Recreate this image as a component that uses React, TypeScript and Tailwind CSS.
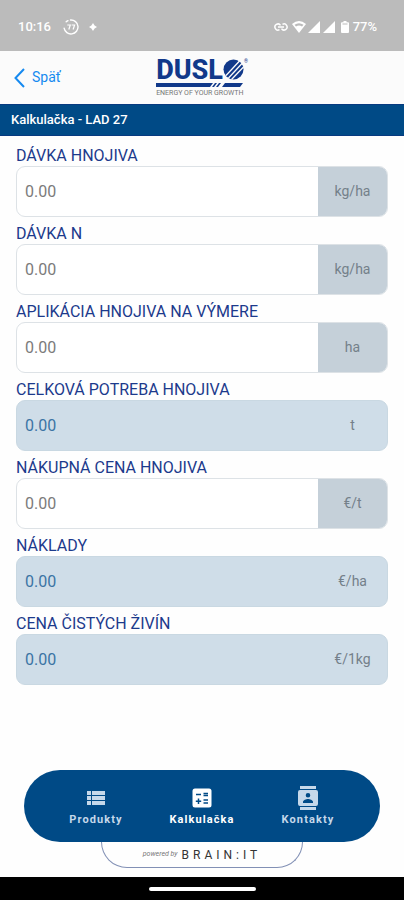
import React from 'react';
import { MdViewList } from 'react-icons/md';
import clsx from 'clsx';

interface Field {
  id: string;
  label: string;
  unit: string;
  computed?: boolean;
}

const fields: Field[] = [
  { id: 'davka-hnojiva', label: 'DÁVKA HNOJIVA', unit: 'kg/ha' },
  { id: 'davka-n', label: 'DÁVKA N', unit: 'kg/ha' },
  { id: 'vymera', label: 'APLIKÁCIA HNOJIVA NA VÝMERE', unit: 'ha' },
  { id: 'potreba', label: 'CELKOVÁ POTREBA HNOJIVA', unit: 't', computed: true },
  { id: 'nakupna-cena', label: 'NÁKUPNÁ CENA HNOJIVA', unit: '€/t' },
  { id: 'naklady', label: 'NÁKLADY', unit: '€/ha', computed: true },
  { id: 'cena-zivin', label: 'CENA ČISTÝCH ŽIVÍN', unit: '€/1kg', computed: true },
];

const StatusBar: React.FC = () => (
  <div className="flex h-[51px] items-center justify-between bg-[#bbbbbb] pl-[18px] pr-[27px] pt-[2px] text-white">
    <div className="flex items-center">
      <span className="text-[13px] font-medium">10:16</span>
      <svg className="ml-3 size-4" viewBox="0 0 16 16" fill="none" stroke="currentColor">
        <path d="M3.2 2.8A7 7 0 0 1 5 1.7M7.5 1a7 7 0 1 1-6.4 8.2" strokeWidth="1.4" strokeLinecap="round" />
        <path d="M4.3 6h3L5.8 10.500M8.6 6h3l-1.5 4.500" strokeWidth="1.2" />
      </svg>
      <svg className="ml-[10px] size-2" viewBox="0 0 8 8" fill="currentColor">
        <path d="M4 0l1.6 2.400L8 4 5.600 5.600 4 8 2.400 5.600 0 4l2.400-1.600z" />
      </svg>
    </div>
    <div className="flex items-center">
      <svg className="h-[10px] w-[14px]" viewBox="0 0 14 10" fill="none" stroke="currentColor" strokeWidth="1.5">
        <path d="M5.500 7.600A3 3 0 1 1 6.500 3.400M8.500 2.400A3 3 0 1 1 7.500 6.600" />
        <path d="M4 5h6" />
      </svg>
      <svg className="ml-1 h-3 w-[14px]" viewBox="0 0 14 12">
        <path d="M0 3Q7-3 14 3L7 12z" fill="currentColor" />
        <path d="M2.500 3.700Q7 .6 11.500 3.700L10 5.400Q7 3.600 4 5.400z" fill="#bbbbbb" />
      </svg>
      <svg className="ml-[2px] h-3 w-[12px]" viewBox="0 0 12 12" fill="currentColor">
        <path d="M12 0v12H0z" />
      </svg>
      <svg className="ml-[3px] h-3 w-[12px]" viewBox="0 0 12 12" fill="currentColor">
        <path d="M12 0v12H0z" />
      </svg>
      <svg className="ml-[6px] h-3 w-2" viewBox="0 0 8 12" fill="currentColor">
        <path d="M2.500 0h3v1.200H7a1 1 0 0 1 1 1V11a1 1 0 0 1-1 1H1a1 1 0 0 1-1-1V2.200a1 1 0 0 1 1-1h1.500z" />
        <path d="M1.500 3h5" stroke="#bbbbbb" strokeWidth="1" />
      </svg>
      <span className="ml-1 text-[13px] font-medium">77%</span>
    </div>
  </div>
);

const Logo: React.FC = () => (
  <div className="flex flex-col text-[#11398a]">
    <div className="flex items-center">
      <span className="text-[27px] font-extrabold leading-[22px]">DUSL</span>
      <svg className="size-[21px]" viewBox="0 0 21 21">
        <circle cx="10.500" cy="10.500" r="10" fill="currentColor" />
        <path d="M3 16.500L16.500 2M5.500 19L19 4.500M8.500 20.500L20.500 8" stroke="#fbfbfb" strokeWidth="1.3" />
      </svg>
      <span className="self-start text-[5px] leading-[5px]">®</span>
    </div>
    <svg className="mt-[2px] h-1 w-[87px]" viewBox="0 0 87 4" fill="currentColor">
      <path d="M0 0h57l-3 4H0zM59 0h2l-3 4h-2zM63 0h2l-3 4h-2zM69 0h18l-3 4H66z" />
    </svg>
    <span className="mt-[2px] text-[7px] leading-[8px] text-[#777777]">ENERGY OF YOUR GROWTH</span>
  </div>
);

const Header: React.FC = () => (
  <header>
    <div className="grid h-[53px] grid-cols-[1fr_auto_1fr] items-center bg-[#fbfbfb] px-[14px]">
      <button type="button" className="flex items-center gap-[7px] justify-self-start text-[14px] text-[#168af0]">
        <svg className="h-5 w-[11px]" viewBox="0 0 11 20" fill="none" stroke="currentColor" strokeWidth="2">
          <path d="M10 1L1.500 10 10 19" />
        </svg>
        Späť
      </button>
      <Logo />
    </div>
    <h1 className="flex h-8 items-center border-y border-[#083a80] bg-[#004a86] px-[11px] text-[13px] font-medium text-white">
      Kalkulačka - LAD 27
    </h1>
  </header>
);

const CalculatorField: React.FC<{ field: Field }> = ({ field }) => (
  <div>
    <label htmlFor={field.id} className="block text-[16px] leading-5 text-[#1c3a8c]">
      {field.label}
    </label>
    <div
      className={clsx(
        'flex h-[51px] overflow-hidden rounded-[9px] border',
        field.computed ? 'border-[#c9d8e2] bg-[#cfdde8]' : 'border-[#dde2e6] bg-white'
      )}
    >
      <input
        id={field.id}
        type="text"
        inputMode="decimal"
        placeholder="0.00"
        readOnly={field.computed}
        className={clsx(
          'min-w-0 flex-1 bg-transparent px-2 text-[16px] outline-none',
          field.computed ? 'placeholder:text-[#3b74a4]' : 'placeholder:text-[#7b7b7b]'
        )}
      />
      <span
        className={clsx(
          'flex w-[69px] items-center justify-center text-[14px] text-[#74808a]',
          !field.computed && 'bg-[#c5d0d9]'
        )}
      >
        {field.unit}
      </span>
    </div>
  </div>
);

const CalculatorIcon: React.FC = () => (
  <svg className="size-6" viewBox="0 0 24 24">
    <rect x="2.500" y="2.500" width="19" height="19" rx="2.500" fill="currentColor" />
    <path
      d="M6 8.500h5M13.500 7.500h4.500M13.500 9.500h4.500M8.500 12.500v5.500M5.800 15.200h5.400M13.500 14h4.500M13.500 17h4.500"
      stroke="#004a86"
      strokeWidth="1.5"
    />
  </svg>
);

const ContactsIcon: React.FC = () => (
  <svg className="size-6" viewBox="0 0 24 24">
    <path
      d="M4 0h16v3H4zM4 21h16v3H4zM4 4h16a2 2 0 0 1 2 2v12a2 2 0 0 1-2 2H4a2 2 0 0 1-2-2V6a2 2 0 0 1 2-2z"
      fill="currentColor"
    />
    <path d="M12 7a2.300 2.300 0 1 1 0 4.600A2.300 2.300 0 0 1 12 7zM7 17v-1.200c0-1.900 3.300-2.900 5-2.900s5 1 5 2.900V17z" fill="#004a86" />
  </svg>
);

const NavItem: React.FC<{ icon: React.ReactNode; label: string; active?: boolean }> = ({ icon, label, active }) => (
  <a
    href="#"
    aria-current={active ? 'page' : undefined}
    className={clsx('flex w-[106px] flex-col items-center gap-[2px]', active ? 'text-white' : 'text-[#c5d8ea]')}
  >
    {icon}
    <span className="text-[11px] font-bold leading-4 tracking-widest">{label}</span>
  </a>
);

const BottomNav: React.FC = () => (
  <footer className="mt-auto">
    <div className="px-6 pb-[9px]">
      <nav className="flex h-[72px] items-center justify-center rounded-full bg-[#004a86] pt-[2px]">
        <NavItem icon={<MdViewList className="size-6" />} label="Produkty" />
        <NavItem icon={<CalculatorIcon />} label="Kalkulačka" active />
        <NavItem icon={<ContactsIcon />} label="Kontakty" />
      </nav>
      <div className="mx-auto flex h-[26px] w-[202px] items-center justify-center gap-1 rounded-b-[30px] border border-t-0 border-[#8290b5]">
        <span className="text-[7px] italic text-[#777777]">powered by</span>
        <span className="text-[12px] tracking-[4px] text-[#333333]">BRAIN:IT</span>
      </div>
    </div>
    <div className="flex h-[23px] items-center justify-center bg-black">
      <div className="h-1 w-[107px] rounded-full bg-white" />
    </div>
  </footer>
);

export default function App() {
  return (
    <div className="flex min-h-screen flex-col bg-[#fefefe] font-[Roboto,sans-serif]">
      <StatusBar />
      <Header />
      <main className="flex flex-col gap-[7px] px-4 pb-6 pt-[10px]">
        {fields.map((field) => (
          <CalculatorField key={field.id} field={field} />
        ))}
      </main>
      <BottomNav />
    </div>
  );
}
